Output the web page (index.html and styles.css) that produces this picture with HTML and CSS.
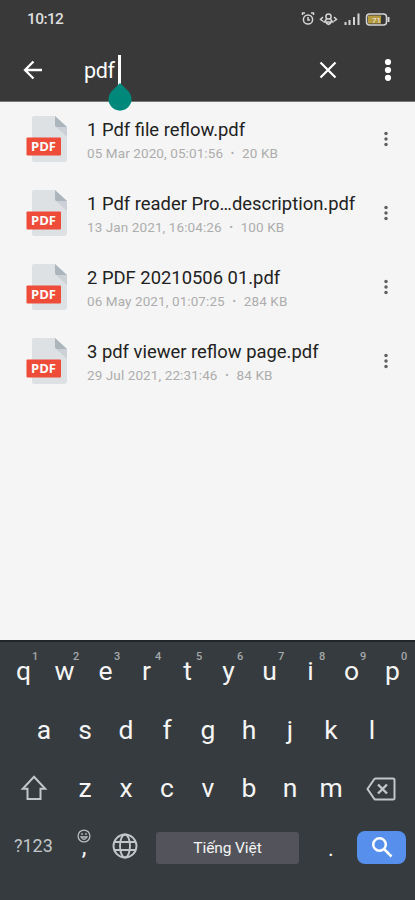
FILE: index.html
```html
<!DOCTYPE html>
<html lang="en">
<head>
<meta charset="utf-8">
<title>File search</title>
<link rel="stylesheet" href="styles.css">
</head>
<body>
<svg class="defs" width="0" height="0">
  <symbol id="doc" viewBox="0 0 42 48">
    <path d="M8 0h21l12 11v32q0 3-3 3H8q-2 0-2-2V2q0-2 2-2z" fill="#dde1e4"/>
    <path d="M29 10l12 11V11z" fill="#cbd1d6"/>
    <path d="M29 0l12 11H31q-2 0-2-2z" fill="#acb5bc"/>
    <rect x="0.5" y="21.500" width="34.5" height="18" rx="1" fill="#ef4b39"/>
  </symbol>
  <symbol id="dots" viewBox="0 0 6 16">
    <circle cx="3" cy="2.5" r="1.75"/><circle cx="3" cy="8" r="1.75"/><circle cx="3" cy="13.5" r="1.75"/>
  </symbol>
</svg>
<div class="phone">
  <header class="top">
    <div class="status">
      <span class="time">10:12</span>
      <svg class="tray" width="90" height="16" viewBox="0 0 90 16" fill="none" stroke="#d5d5d5" stroke-width="1.5">
        <circle cx="7" cy="8.500" r="4.600"/><path d="M1.500 4V2h2.500M12.500 4V2H10M7 6v3h2"/>
        <circle cx="27.500" cy="5.500" r="2.600"/><path d="M25.500 8l-2 3h8l-2-3M22 6L19.500 8.500l3 2M33 6l2.500 2.500-3 2M25 12l2.500 1.500L30 12"/>
        <path d="M44.500 14v-3M48.500 14V9M53 14V6M57.500 14V2.500" stroke-width="2"/>
        <rect x="65.500" y="3" width="20" height="11" rx="3"/><rect x="67" y="4.500" width="13" height="8" fill="#b69a3e" stroke="none"/><path d="M87.500 6v5" stroke-width="2"/>
        <text class="charge" x="71" y="11.500">71</text>
      </svg>
    </div>
    <div class="search">
      <svg class="back" width="20" height="20" viewBox="0 0 20 20"><path d="M19 10H2M10.500 1.500L2 10l8.500 8.500" fill="none" stroke="#fff" stroke-width="2.300"/></svg>
      <div class="query"><span>pdf</span><i class="caret"><svg class="handle" width="24" height="28" viewBox="0 0 24 28"><path d="M12 0l8.300 8.200a11.500 11.500 0 1 1-16.600 0z" fill="#00897b"/></svg></i></div>
      <svg class="clear" width="18" height="18" viewBox="0 0 18 18"><path d="M1.500 1.500l15 15M16.500 1.500l-15 15" stroke="#fff" stroke-width="2.200"/></svg>
      <svg class="more" width="8" height="24" viewBox="0 0 8 24" fill="#fff"><circle cx="4" cy="4" r="3.100"/><circle cx="4" cy="12" r="3.100"/><circle cx="4" cy="19.800" r="3.100"/></svg>
    </div>
  </header>
  <main class="files">
    <article class="file">
      <div class="icon"><svg width="42" height="48"><use href="#doc"/></svg><b>PDF</b></div>
      <div class="info"><h2><span>1 Pdf file reflow.pdf</span></h2><p>05 Mar 2020, 05:01:56<i>•</i>20 KB</p></div>
      <svg class="menu" width="6" height="16"><use href="#dots"/></svg>
    </article>
    <article class="file">
      <div class="icon"><svg width="42" height="48"><use href="#doc"/></svg><b>PDF</b></div>
      <div class="info"><h2><span>1 Pdf reader Pro…description.pdf</span></h2><p>13 Jan 2021, 16:04:26<i>•</i>100 KB</p></div>
      <svg class="menu" width="6" height="16"><use href="#dots"/></svg>
    </article>
    <article class="file">
      <div class="icon"><svg width="42" height="48"><use href="#doc"/></svg><b>PDF</b></div>
      <div class="info"><h2><span>2 PDF 20210506 01.pdf</span></h2><p>06 May 2021, 01:07:25<i>•</i>284 KB</p></div>
      <svg class="menu" width="6" height="16"><use href="#dots"/></svg>
    </article>
    <article class="file">
      <div class="icon"><svg width="42" height="48"><use href="#doc"/></svg><b>PDF</b></div>
      <div class="info"><h2><span>3 pdf viewer reflow page.pdf</span></h2><p>29 Jul 2021, 22:31:46<i>•</i>84 KB</p></div>
      <svg class="menu" width="6" height="16"><use href="#dots"/></svg>
    </article>
  </main>
  <section class="keyboard">
    <div class="keys">
      <span>q<sup>1</sup></span><span>w<sup>2</sup></span><span>e<sup>3</sup></span><span>r<sup>4</sup></span><span>t<sup>5</sup></span><span>y<sup>6</sup></span><span>u<sup>7</sup></span><span>i<sup>8</sup></span><span>o<sup>9</sup></span><span>p<sup>0</sup></span>
    </div>
    <div class="keys">
      <span>a</span><span>s</span><span>d</span><span>f</span><span>g</span><span>h</span><span>j</span><span>k</span><span>l</span>
    </div>
    <div class="keys third">
      <svg class="shift" width="28" height="26" viewBox="0 0 28 26"><path d="M14 1.800L25.200 13.800H20.500V24H7.500V13.800H2.800z" fill="none" stroke="#c3c6c8" stroke-width="2"/></svg>
      <span>z</span><span>x</span><span>c</span><span>v</span><span>b</span><span>n</span><span>m</span>
      <svg class="erase" width="30" height="24" viewBox="0 0 30 24" fill="none" stroke="#c3c6c8" stroke-width="2"><path d="M9.500 1.500H27q1.500 0 1.500 1.500v18q0 1.500-1.500 1.500H9.500Q8.500 22.500 8 21.500L1.500 12 8 2.500Q8.500 1.500 9.500 1.500z"/><path d="M12 7.500l9 9M21 7.500l-9 9" stroke-width="2.400"/></svg>
    </div>
    <div class="bottom">
      <span class="sym">?123</span>
      <div class="comma"><svg width="14" height="14" viewBox="0 0 14 14" fill="none" stroke="#b9bdbf" stroke-width="1.300"><circle cx="7" cy="7" r="5.900"/><path d="M4 8q3 4.500 6 0z"/><path d="M5 4v2M9 4v2"/></svg><span>,</span></div>
      <svg class="globe" width="26" height="26" viewBox="0 0 26 26" fill="none" stroke="#c3c6c8" stroke-width="1.900"><circle cx="13" cy="13" r="11.500"/><ellipse cx="13" cy="13" rx="5" ry="11.500"/><path d="M2.500 9h21M2.500 17h21"/></svg>
      <div class="space">Tiếng Việt</div>
      <span class="period">.</span>
      <div class="go"><svg width="22" height="22" viewBox="0 0 22 22" fill="none" stroke="#fff" stroke-width="2.500"><circle cx="8.500" cy="8.500" r="6.300"/><path d="M13 13l7.500 7.500"/></svg></div>
    </div>
  </section>
</div>
</body>
</html>
```
FILE: styles.css
```css
* { box-sizing: border-box; }
body { margin: 0; font-family: Roboto, "Liberation Sans", sans-serif; }
svg { display: block; flex: none; }
.defs { position: absolute; }
.phone { width: 415px; height: 900px; display: flex; flex-direction: column; background: #f5f5f5; overflow: hidden; }
.top { height: 102px; flex: none; background: #393939; border-bottom: 1px solid #777; }
.status { height: 38px; padding: 0 24px 0 27px; display: flex; align-items: center; justify-content: space-between; }
.time { font-size: 15.500px; font-weight: 500; color: #dedede; letter-spacing: -0.6px; }
.charge { font-size: 8px; fill: #eee; stroke: none; }
.search { height: 63px; display: flex; align-items: center; color: #fff; padding: 0 23px; }
.query { flex: 1; display: flex; align-items: center; margin-left: 41px; font-size: 21.500px; letter-spacing: -0.4px; }
.query span { width: 34px; padding-top: 1px; }
.caret { position: relative; width: 3px; height: 30px; background: #fff; }
.handle { position: absolute; left: -10.5px; top: 28px; z-index: 2; }
.clear { margin-right: 47px; }
.files { flex: 1; padding-top: 1px; }
.file { height: 74px; display: flex; padding-left: 26px; }
.icon { position: relative; width: 42px; height: 48px; margin-top: 13px; }
.icon b { position: absolute; left: 0; top: 21px; width: 35px; text-align: center; font: 700 13px/18px "Open Sans", sans-serif; color: #fff; }
.info { width: 298px; padding: 14px 0 0 19px; white-space: nowrap; }
h2 { margin: 0; font-size: 18.400px; line-height: 25px; font-weight: 400; color: #222; }
p { margin: 1px 0 0; font-size: 13.500px; line-height: 20px; letter-spacing: 0.1px; color: #adadad; }
p i { font-style: normal; font-size: 10px; display: inline-block; width: 19px; text-align: center; vertical-align: 1px; }
.menu { margin: 28px 0 0 17px; fill: #606060; }
.keyboard { height: 260px; flex: none; background: #353b3e; border-top: 2px solid #202528; padding-top: 2px; color: #f5f5f5; }
.keys { height: 58.500px; display: flex; justify-content: center; font-size: 26.500px; line-height: 54px; }
.keys span { width: 41px; text-align: center; position: relative; left: 0.5px; }
.keys sup { position: absolute; left: 29px; top: 7px; font: 500 11px/12px Roboto, sans-serif; color: #a5a9ab; }
.keys.third { justify-content: flex-start; align-items: flex-start; }
.shift { margin: 14px 16px 0 20px; }
.erase { margin: 16px 0 0 15px; }
.bottom { display: flex; align-items: flex-start; height: 64px; }
.sym { width: 40px; margin: 14px 0 0 14px; font-size: 18px; line-height: 24px; color: #c3c6c8; }
.comma { width: 14px; margin: 9px 0 0 23px; }
.comma span { display: block; text-align: center; font-size: 24px; line-height: 20px; margin-top: -6px; }
.globe { margin: 13px 0 0 21px; }
.space { width: 143px; height: 32px; margin: 12px 0 0 18px; border-radius: 3px; background: #53545b; text-align: center; font-size: 15.500px; letter-spacing: -0.1px; line-height: 33px; }
.period { width: 10px; margin: 16px 0 0 27px; text-align: center; font-size: 22px; line-height: 25px; }
.go { width: 49px; height: 33px; margin: 11px 0 0 21px; border-radius: 8px; background: #5790ec; display: flex; align-items: center; justify-content: center; }
```
